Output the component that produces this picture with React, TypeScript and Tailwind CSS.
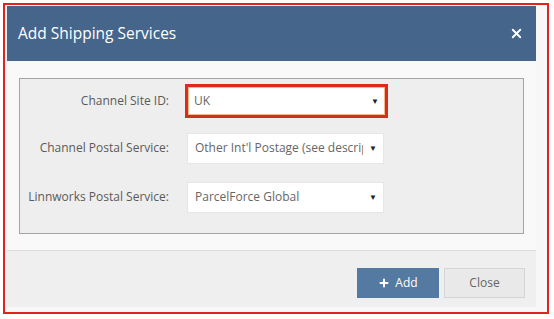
import { Plus, X } from "lucide-react";

const font = { fontFamily: '"Open Sans", "Liberation Sans", sans-serif' };

function Row({
  label,
  value,
  highlight,
  className,
}: {
  label: string;
  value: string;
  highlight?: boolean;
  className?: string;
}) {
  return (
    <div className={"flex items-center h-[34px] " + (className ?? "")}>
      <div className="w-[149px] text-right text-[12px] text-[#5a5a5a] whitespace-nowrap">
        {label}
      </div>
      <div
        className={
          highlight
            ? "ml-[16px] w-[203px] h-[34px] border-[3px] border-[#dd2a1f] bg-white flex items-center pl-[6px] pr-[6px] shadow-[inset_0_0_0_1px_#f5b98a]"
            : "ml-[18px] w-[197px] h-[31px] border border-[#e6e6e6] bg-white flex items-center pl-[7px] pr-[6px]"
        }
      >
        <span className="flex-1 overflow-hidden whitespace-nowrap text-[12px] text-[#666] mr-[6px]">
          {value}
        </span>
        <span className="text-[8px] text-[#222] leading-none">▼</span>
      </div>
    </div>
  );
}

export default function App() {
  return (
    <div className="w-[554px] h-[319px] bg-white pt-[3px] pl-[3px]" style={font}>
      <div className="w-[546px] h-[311px] border-2 border-[#e0231c] bg-[#f7f7f7] pl-[2px] pt-px">
        <div className="w-[529px] flex flex-col">
          <div className="h-[55px] bg-[#45658a] flex items-center justify-between pl-[11px] pr-[12px]">
            <span className="text-[15.5px] text-white">Add Shipping Services</span>
            <X size={15} strokeWidth={3} className="text-white" />
          </div>
          <div className="bg-[#f9f9f9] pl-[12px] pt-[17px] pb-[16px] border-b border-[#dcdcdc]">
            <div className="w-[505px] h-[156px] border border-[#a5a5a5] bg-[#eeeeee] flex flex-col pt-[5px]">
              <Row label="Channel Site ID:" value="UK" highlight />
              <Row
                className="mt-[13px]"
                label="Channel Postal Service:"
                value="Other Int'l Postage (see description)"
              />
              <Row
                className="mt-[15px]"
                label="Linnworks Postal Service:"
                value="ParcelForce Global"
              />
            </div>
          </div>
          <div className="h-[56px] bg-[#efefef] flex items-start justify-end pt-[17px] pr-[11px] gap-[5px]">
            <button
              type="button"
              className="w-[82px] h-[30px] bg-[#557aa1] text-white text-[12px] flex items-center justify-center gap-[5px]"
            >
              <Plus size={12} strokeWidth={4} />
              Add
            </button>
            <button
              type="button"
              className="w-[81px] h-[30px] bg-[#e9e9e9] border border-[#d5d5d5] text-[#666] text-[12px]"
            >
              Close
            </button>
          </div>
        </div>
      </div>
    </div>
  );
}
